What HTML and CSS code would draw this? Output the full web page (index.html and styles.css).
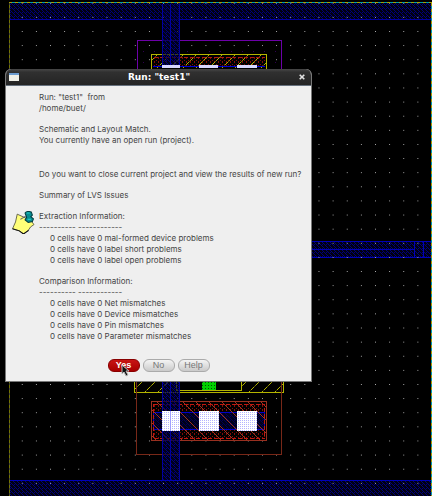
FILE: index.html
```html
<!DOCTYPE html>
<html lang="en">
<head>
<meta charset="utf-8">
<title>Run: "test1"</title>
<link rel="stylesheet" href="styles.css">
</head>
<body>
<main class="workspace">
  <svg class="canvas" aria-hidden="true" shape-rendering="crispEdges">
    <defs>
      <pattern id="grid" x="18" y="-1" width="14.13" height="14.12" patternUnits="userSpaceOnUse"><rect x="4" y="4" width="1" height="1" fill="#b0b0b0"/></pattern>
      <pattern id="metal" width="4" height="4" patternUnits="userSpaceOnUse"><g fill="#000078"><rect width="1" height="1"/><rect x="2" y="0" width="1" height="1"/><rect x="1" y="1" width="1" height="1"/><rect x="2" y="2" width="1" height="1"/><rect x="3" y="3" width="1" height="1"/></g></pattern>
      <pattern id="contact" width="2" height="2" patternUnits="userSpaceOnUse"><rect width="2" height="2" fill="#fff"/><path d="M0 0h1v1H0z" fill="#b4b4ff"/></pattern>
      <pattern id="poly" width="4" height="4" patternUnits="userSpaceOnUse"><path d="M0 0h1v1H0zM2 1h1v2H2z" fill="#840c08"/></pattern>
      <pattern id="via" width="3" height="3" patternUnits="userSpaceOnUse"><rect width="3" height="3" fill="#00d000"/><path d="M1 1h1v1H1z" fill="#005000"/></pattern>
      <pattern id="slash" x="4" width="13" height="13" patternUnits="userSpaceOnUse"><path d="M0 13L13 0" stroke="#b4b400" stroke-dasharray="5 1" shape-rendering="auto"/></pattern>
      <pattern id="back" x="2" width="13" height="13" patternUnits="userSpaceOnUse"><path d="M0 0L13 13" stroke="#a03420" shape-rendering="auto"/></pattern>
    </defs>
    <rect x="10" y="3" width="100%" height="16" fill="#000010"/>
    <rect x="10" y="3" width="100%" height="16" fill="url(#metal)"/>
    <rect x="10" y="19" width="100%" height="1" fill="#0000a0"/>
    <rect x="10" y="481" width="100%" height="100%" fill="#000010"/>
    <rect x="10" y="481" width="100%" height="100%" fill="url(#metal)"/>
    <rect x="10" y="480" width="100%" height="1" fill="#0000b8"/>
    <rect x="300" y="241" width="100%" height="17" fill="#000010"/>
    <rect x="300" y="241" width="100%" height="17" fill="url(#metal)"/>
    <path d="M300 241.500H431M300 249.500H414M300 257.500H431M414.500 242v16M423.500 242v16" stroke="#0000b8"/>
    <rect x="20" y="3" width="100%" height="100%" fill="url(#grid)"/>
    <path d="M137 90V40.500H281V90" fill="none" stroke="#6c00a8"/>
    <path d="M143 51.500H281M143 62.500H281" stroke="#300050" stroke-dasharray="1 10"/>
    <rect x="151.500" y="54.500" width="115" height="50" fill="#000"/>
    <rect x="153" y="57" width="112" height="9" fill="url(#poly)"/>
    <rect x="152" y="55" width="115" height="13" fill="url(#slash)"/>
    <rect x="151.500" y="54.500" width="115" height="50" fill="none" stroke="#b4b400"/>
    <path d="M154 57.500H265" stroke="#b01810" stroke-dasharray="4 2"/>
    <path d="M153 66.500H265" stroke="#0000d8"/>
    <rect x="134.500" y="360.500" width="149" height="32" fill="#000"/>
    <rect x="134" y="382" width="42" height="10" fill="url(#slash)"/>
    <rect x="242" y="382" width="42" height="10" fill="url(#slash)"/>
    <path d="M134.500 380V392.500H283.500V380M176.500 380V390.500H241.500V380" fill="none" stroke="#b4b400"/>
    <rect x="202" y="380" width="14" height="10" fill="url(#via)"/>
    <path d="M136.500 380V454.500H281.500V380" fill="none" stroke="#782818"/>
    <rect x="151.500" y="401.500" width="115" height="39" fill="#000" stroke="#983020"/>
    <rect x="153" y="403" width="112" height="36" fill="url(#poly)"/>
    <rect x="153.500" y="412.500" width="111" height="17" fill="#000018" stroke="#0000c8"/>
    <rect x="154" y="413" width="110" height="16" fill="url(#metal)" opacity=".6"/>
    <rect x="152" y="402" width="114" height="38" fill="url(#back)"/>
    <rect x="153.500" y="404.500" width="111" height="34" fill="none" stroke="#c01810" stroke-dasharray="4 2"/>
    <path d="M162 4h18v61H162zM162 382h18v29H162zM162 431h18v49H162z" fill="#000028" opacity=".65"/>
    <path d="M162 4h18v61H162zM162 382h18v29H162zM162 431h18v49H162z" fill="url(#metal)"/>
    <path d="M162.500 4V65M170.500 4V65M179.500 4V65M162.500 382V411M170.500 382V411M179.500 382V411M162.500 431V480M170.500 431V480M179.500 431V480" stroke="#0000c0" opacity=".75"/>
    <path d="M162 66.500h18M199 66.500h19M237 66.500h20" stroke="#d8d8ff" stroke-width="3"/>
    <path d="M162 411h18v20H162zM199 411h20v20H199zM237 411h20v20H237z" fill="url(#contact)"/>
    <path d="M170.500 411v20" stroke="#a0a0ff"/>
    <path d="M9.500 3V2000" stroke="#747400"/>
    <path d="M9.500 3V2000" stroke="#44443c" stroke-dasharray="2 3"/>
    <rect x="9" y="2" width="100%" height="1" fill="#009cac"/>
    <path d="M9 2.500H2000" stroke="#a8a000" stroke-dasharray="3 3"/>
    <svg x="100%" overflow="visible"><path d="M-.5 3V2000" stroke="#009cac"/><path d="M-.5 3V2000" stroke="#b09800" stroke-dasharray="3 3"/></svg>
  </svg>

  <section class="dialog" role="dialog" aria-labelledby="title">
    <header class="titlebar">
      <svg class="window-icon" viewBox="0 0 10 8" aria-hidden="true"><path fill="#f0f0e8" d="M0 0h10v8H0z"/><path fill="#6c9cd0" d="M0 0h10v2H0z"/></svg>
      <h1 class="title" id="title">Run: "test1"</h1>
      <button class="close" type="button" aria-label="Close"><svg viewBox="0 0 6 6"><path d="M.7.7l4.600 4.600M5.300.7L.7 5.300" stroke="#e4e4e4" stroke-width="1.600"/></svg></button>
    </header>
    <div class="body">
      <svg class="note" viewBox="0 0 22 22" aria-hidden="true">
        <path d="M5 3L18 9 21 13Q17 15 16 18L11 22 7 19 .5 17Q4 11 5 3z" fill="#ffff78" stroke="#505038" stroke-width=".8"/>
        <path d="M.5 17l6.500 2 4 3 5-3.500" fill="none" stroke="#111"/>
        <path d="M8 8l5-3" stroke="#666"/>
        <path d="M12.500 2q2-2.500 6-1l1 3-1.500 1.500 2.500 2-1 2.500-4 1-3-2.500 1.500-2.500z" fill="#088c90" stroke="#003c40"/>
        <path d="M14 2h3M15 8h3" stroke="#20c8c8"/>
      </svg>
      <div class="message">
        <p>Run: "test1"&nbsp; from<br>/home/buet/</p>
        <p class="status">Schematic and Layout Match.<br>You currently have an open run (project).</p>
        <p>Do you want to close current project and view the results of new run?</p>
        <p>Summary of LVS Issues</p>
        <div>
          <p>Extraction Information:<br>---------- ------------</p>
          <ul><li>0 cells have 0 mal-formed device problems</li><li>0 cells have 0 label short problems</li><li>0 cells have 0 label open problems</li></ul>
        </div>
        <div>
          <p>Comparison Information:<br>---------- ------------</p>
          <ul><li>0 cells have 0 Net mismatches</li><li>0 cells have 0 Device mismatches</li><li>0 cells have 0 Pin mismatches</li><li>0 cells have 0 Parameter mismatches</li></ul>
        </div>
      </div>
    </div>
    <footer class="actions">
      <button class="button primary" type="button">Yes</button>
      <button class="button" type="button">No</button>
      <button class="button" type="button">Help</button>
    </footer>
  </section>
  <svg class="cursor" viewBox="0 0 9 13" aria-hidden="true"><path d="M1 1v9l2-2 2 4 2-1-2-4h3z" fill="#111" stroke="#bbb"/></svg>
</main>
</body>
</html>
```

FILE: styles.css
```css
* { box-sizing: border-box; }

body {
  margin: 0;
  background: #000;
  font-family: Inter, "Liberation Sans", Arial, sans-serif;
}

.workspace {
  position: relative;
  min-height: 100vh;
  overflow: hidden;
}

.canvas {
  position: absolute;
  inset: 0;
  width: 100%;
  height: 100%;
}

.dialog {
  position: absolute;
  top: 69px;
  left: 5px;
  width: max-content;
  min-width: 307px;
  background: #efefef;
  border: 1px solid #777;
  border-top: 0;
  border-radius: 6px 6px 0 0;
  overflow: hidden;
}

.titlebar {
  display: flex;
  align-items: center;
  justify-content: space-between;
  height: 17px;
  padding: 0 6px 0 3px;
  background: linear-gradient(#484848, #303030 20%, #242424);
  border-bottom: 1px solid #66717e;
}

.window-icon {
  width: 10px;
  height: 8px;
}

.title {
  margin: 0;
  color: #fff;
  font: bold 9px/12px "DejaVu Sans", sans-serif;
}

.close {
  display: flex;
  padding: 0;
  border: 0;
  background: none;
}

.close svg {
  width: 6px;
  height: 6px;
}

.body {
  display: flex;
  gap: 4px;
  padding: 6px 6px 0;
}

.note {
  width: 23px;
  height: 23px;
  margin-top: 119px;
  flex: none;
}

.message {
  display: flex;
  flex-direction: column;
  gap: 10px;
  color: #444;
  font-size: 8px;
  line-height: 11px;
}

.message p,
.message ul {
  margin: 0;
  padding: 0;
  list-style: none;
}

.message .status {
  margin-bottom: 13px;
}

.message ul {
  padding-left: 11px;
}

.actions {
  display: flex;
  justify-content: center;
  gap: 3px;
  padding: 17px 0 9px;
}

.button {
  width: 32px;
  height: 13px;
  padding: 0;
  color: #777;
  font: 9px/11px "Liberation Sans", Arial, sans-serif;
  background: linear-gradient(#f4f4f4, #cacaca);
  border: 1px solid #aaa;
  border-radius: 6px;
}

.primary {
  color: #fff;
  font-weight: bold;
  background: linear-gradient(#c81414, #a80000);
  border-color: #880000;
}

.cursor {
  position: absolute;
  top: 364px;
  left: 121px;
  width: 9px;
  height: 13px;
}
```
